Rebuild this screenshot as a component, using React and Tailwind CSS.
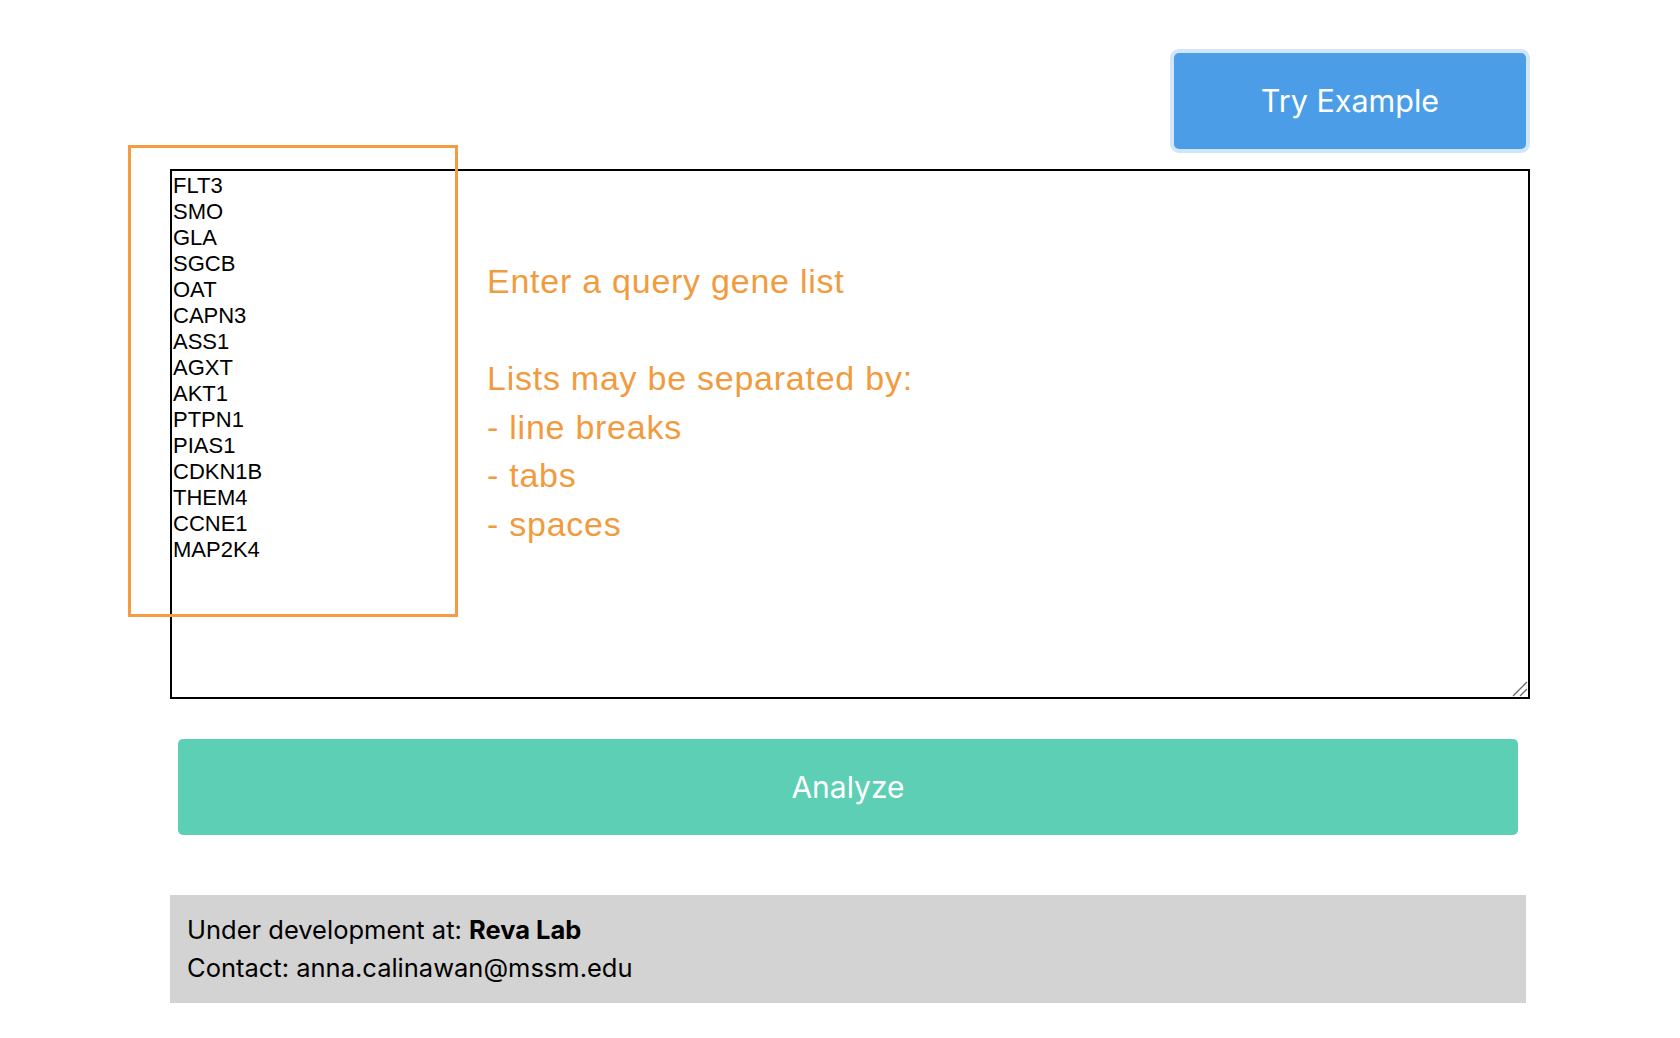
import { useState } from "react";

const GENES = [
  "FLT3",
  "SMO",
  "GLA",
  "SGCB",
  "OAT",
  "CAPN3",
  "ASS1",
  "AGXT",
  "AKT1",
  "PTPN1",
  "PIAS1",
  "CDKN1B",
  "THEM4",
  "CCNE1",
  "MAP2K4",
];

function App() {
  const [genes, setGenes] = useState(GENES.join("\n"));

  return (
    <div className="min-h-screen bg-white font-['Inter',sans-serif]">
      <div className="ml-[170px] w-[1360px] pt-[53px]">
        {/* try example */}
        <div className="flex justify-end pr-[4px]">
          <button
            className="h-[96px] w-[352px] rounded-[5px] bg-[#4b9de8] text-[30.5px] text-white ring-4 ring-[#d2e6fa]"
            onClick={() => setGenes(GENES.join("\n"))}
          >
            Try Example
          </button>
        </div>

        {/* gene list input */}
        <div className="relative mt-[20px] h-[530px]">
          <textarea
            className="block h-full w-full resize-none border-2 border-black pl-[1px] pt-[2px] font-['Liberation_Sans',Arial,sans-serif] text-[22px] leading-[26px] text-black outline-none"
            value={genes}
            onChange={(e) => setGenes(e.target.value)}
            spellCheck={false}
          />
          <div className="pointer-events-none absolute left-[317px] top-[88px] font-['Liberation_Sans',Arial,sans-serif] text-[34px] leading-[48.5px] tracking-[0.75px] text-[#f29b3e]">
            <p>Enter a query gene list</p>
            <p>&nbsp;</p>
            <p>Lists may be separated by:</p>
            <p>- line breaks</p>
            <p>- tabs</p>
            <p>- spaces</p>
          </div>
          {/* resize grip */}
          <svg
            className="pointer-events-none absolute bottom-[2px] right-[2px]"
            width="16"
            height="16"
            viewBox="0 0 16 16"
          >
            <path d="M1 15L15 1M8 15L15 8" stroke="#6b6b6b" strokeWidth="1.3" />
          </svg>
          {/* highlight box */}
          <div className="pointer-events-none absolute left-[-42px] top-[-24px] h-[472px] w-[330px] border-[3px] border-[#f39c42]" />
        </div>

        <button className="ml-[8px] mt-[40px] h-[96px] w-[1340px] rounded-[5px] bg-[#5ccfb4] text-[30px] text-white">
          Analyze
        </button>

        <footer className="mt-[60px] w-[1356px] bg-[#d3d3d3] px-[17px] py-[16px] text-[25.5px] leading-[38px] text-black">
          <div>
            Under development at: <b>Reva Lab</b>
          </div>
          <div>Contact: anna.calinawan@mssm.edu</div>
        </footer>
      </div>
    </div>
  );
}

export default App;
